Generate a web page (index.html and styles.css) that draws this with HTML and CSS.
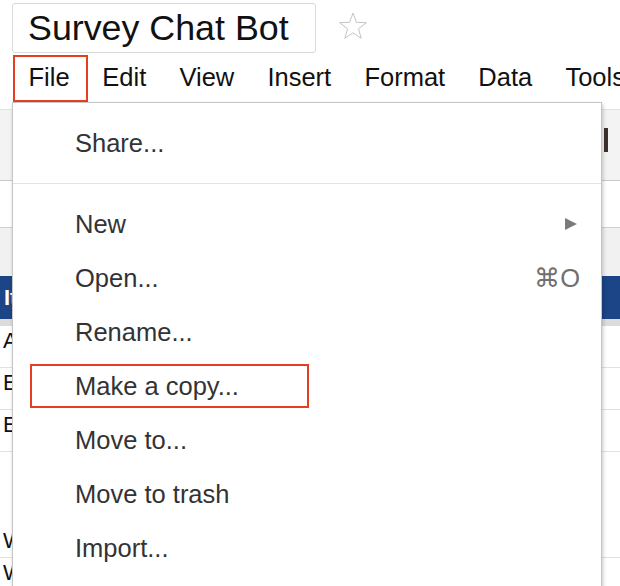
FILE: index.html
```html
<!DOCTYPE html>
<html>
<head>
<meta charset="utf-8">
<link rel="stylesheet" href="styles.css">
</head>
<body>
<div class="header">
  <div class="title-row">
    <div class="title-box">Survey Chat Bot</div>
    <svg class="star" width="30" height="30" viewBox="0 0 30 30"><polygon points="15,2 18.41,11.31 28.31,11.67 20.52,17.79 23.23,27.33 15,21.8 6.77,27.33 9.48,17.79 1.69,11.67 11.59,11.31" fill="none" stroke="#c4c4c4" stroke-width="1"/></svg>
  </div>
  <div class="menubar">
    <span class="mb-item mb-file">File</span>
    <span class="mb-item">Edit</span>
    <span class="mb-item">View</span>
    <span class="mb-item">Insert</span>
    <span class="mb-item">Format</span>
    <span class="mb-item">Data</span>
    <span class="mb-item">Tools</span>
  </div>
</div>
<div class="sheet">
  <div class="toolbar"><span class="tb-icon"></span></div>
  <div class="formula"></div>
  <div class="colhead"></div>
  <div class="hdr-row">Item</div>
  <div class="freeze"></div>
  <div class="row">Answer</div>
  <div class="row">Email</div>
  <div class="row">Email</div>
  <div class="row row-tall">What</div>
  <div class="row">Why</div>
</div>
<div class="dropdown">
  <div class="dd-item">Share...</div>
  <div class="dd-sep"></div>
  <div class="dd-item"><span>New</span><svg class="arrow" width="12" height="12" viewBox="0 0 12 12"><polygon points="0,0 12,6 0,12" fill="#7a7a7a"/></svg></div>
  <div class="dd-item"><span>Open...</span><span class="shortcut">⌘O</span></div>
  <div class="dd-item">Rename...</div>
  <div class="dd-item dd-marked">Make a copy...</div>
  <div class="dd-item">Move to...</div>
  <div class="dd-item">Move to trash</div>
  <div class="dd-item">Import...</div>
</div>
</body>
</html>
```
FILE: styles.css
```css
html, body {
  margin: 0;
  padding: 0;
  background: #fff;
  font-family: "Liberation Sans", Arial, sans-serif;
  overflow: hidden;
}
body {
  height: 586px;
}
.header {
  padding: 3px 0 12px 12px;
  height: 94px;
}
.title-row {
  display: flex;
  align-items: flex-start;
}
.title-box {
  border: 1px solid #d9d9d9;
  border-radius: 3px;
  height: 48px;
  line-height: 48px;
  font-size: 35.8px;
  padding: 0 26px 0 15px;
  color: #111;
}
.star {
  margin: 8px 0 0 22px;
}
.menubar {
  display: flex;
  align-items: flex-start;
  margin: 4px 0 0 17px;
  gap: 33.2px;
  font-size: 25.5px;
  line-height: 40px;
  color: #111;
}
.mb-item {
  white-space: nowrap;
}
.mb-file {
  position: relative;
  z-index: 5;
  border: 2.5px solid #e63e21;
  padding: 0 16.5px 3.5px 13.5px;
  margin: -2.5px -19px -6px -16px;
}
.sheet {
  font-size: 22px;
}
.toolbar {
  height: 70px;
  background: #f3f3f3;
  border-top: 1px solid #e2e2e2;
  border-bottom: 1px solid #cacaca;
  display: flex;
  justify-content: flex-end;
  align-items: flex-start;
}
.tb-icon {
  width: 4px;
  height: 24px;
  background: #3a302c;
  margin: 18px 12px 0 0;
}
.formula {
  height: 46px;
  background: #fff;
  border-bottom: 1px solid #cfcfcf;
}
.colhead {
  height: 48px;
  background: #f1f1f1;
}
.hdr-row {
  height: 43px;
  background: #1c4587;
  color: #fff;
  font-weight: bold;
  line-height: 40px;
  padding-left: 4px;
  padding-top: 2px;
  box-sizing: border-box;
}
.freeze {
  height: 7px;
  background: #dcdcdc;
}
.row {
  height: 41px;
  line-height: 30px;
  padding-left: 3px;
  border-bottom: 1px solid #e2e2e2;
  color: #111;
}
.row-tall {
  height: 106px;
  padding-top: 74px;
  box-sizing: border-box;
}
.dropdown {
  position: absolute;
  left: 12px;
  top: 102px;
  width: 588px;
  height: 480px;
  background: #fff;
  border: 1px solid #c6c6c6;
  box-shadow: 1px 2px 4px rgba(0, 0, 0, 0.22);
  padding-top: 13px;
  z-index: 2;
  font-size: 25.5px;
  color: #333;
}
.dd-item {
  height: 54px;
  line-height: 54px;
  padding: 0 21px 0 62px;
  display: flex;
  justify-content: space-between;
  align-items: center;
  white-space: nowrap;
}
.dd-sep {
  height: 1px;
  background: #e3e3e3;
  margin: 13px 0;
}
.arrow {
  margin-right: 3px;
}
.shortcut {
  color: #707070;
}
.dd-marked {
  position: relative;
}
.dd-marked::after {
  content: "";
  position: absolute;
  left: 17px;
  top: 5px;
  width: 279px;
  height: 44px;
  box-sizing: border-box;
  border: 2.5px solid #e63e21;
}
```
